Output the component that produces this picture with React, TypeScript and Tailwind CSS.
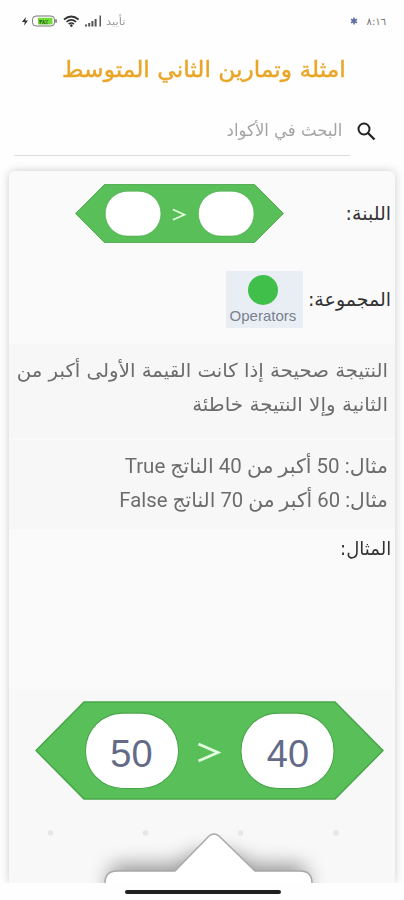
import { ReactNode } from 'react'

type BlockProps = {
  className: string;
  left?: string;
  right?: string;
};

function StatusBar() {
  return (
    <div dir="ltr" className="flex h-[42px] items-center justify-between pl-[21px] pr-[18px]">
      <div className="flex items-center">
        <svg width="85" height="16" viewBox="0 0 85 16">
          <path d="M5 4 .8 9h3L3 12.7 7 7.5H4.3z" fill="#333" />
          <rect x="11.5" y="3" width="22" height="10" rx="3.5" fill="#fff" stroke="#777" />
          <path d="M35 6.2v3.6" stroke="#777" strokeWidth="1.6" />
          <rect x="17" y="4.8" width="14.5" height="6.6" fill="#70dc35" />
          <text x="18" y="10.5" fontSize="6" fontWeight="bold" fill="#28631a" fontFamily="Liberation Sans, sans-serif">٣٨٪</text>
          <g fill="none" stroke="#333" strokeWidth="1.7">
            <path d="M43 6.5q7.300-6 14.600 0" />
            <path d="M45.500 8.900q4.800-4 9.600 0" />
            <path d="M47.600 11q2.700-2 5.400 0" />
          </g>
          <circle cx="50.300" cy="12.600" r="1.300" fill="#333" />
          <g fill="#555">
            <path d="M64 11.500h2v2h-2zM67.200 10h2v3.500h-2zM70.400 8h2v5.500h-2zM73.600 6h2v7.500h-2z" />
            <path d="M78.500 2.500h1.500v11h-1.500z" />
          </g>
        </svg>
        <span className="w-5 origin-left scale-x-115 font-['DejaVu_Sans',sans-serif] text-[10px] text-[#999]">تأييد</span>
      </div>
      <div className="flex items-center gap-[9px] font-['DejaVu_Sans',sans-serif] text-[10px] text-[#777]">
        <svg width="8" height="8" viewBox="0 0 8 8" stroke="#5b6ca5" strokeWidth="1.600">
          <path d="M4 .5v7M1 2.200l6 3.600M7 2.200 1 5.800" />
        </svg>
        <span>٨:١٦</span>
      </div>
    </div>
  )
}

function GreaterBlock({ className, left, right }: BlockProps) {
  return (
    <svg className={className} viewBox="0 0 349 98" preserveAspectRatio="none" direction="ltr" fontFamily="Liberation Sans, sans-serif">
      <path d="M1 49 49 1h251l48 48-48 48H49z" fill="#59c059" stroke="#48a448" strokeWidth="1.500" />
      <rect x="50.500" y="12" width="93" height="74.500" rx="37" fill="#fff" stroke="#48a448" />
      <rect x="206" y="12" width="93" height="74.500" rx="37" fill="#fff" stroke="#48a448" />
      <path d="M163.500 42.500 183 51 163.500 59.500" fill="none" stroke="#e4ffe0" strokeWidth="2.700" />
      {left && <text x="96.500" y="65" textAnchor="middle" fontSize="38" fill="#646b88">{left}</text>}
      {right && <text x="253" y="65" textAnchor="middle" fontSize="38" fill="#646b88">{right}</text>}
    </svg>
  )
}

function Label({ children }: { children: ReactNode }) {
  return <span className="whitespace-nowrap text-[19px] text-[#333]">{children}</span>
}

function App() {
  return (
    <div dir="rtl" className="flex h-[900px] w-[404px] flex-col overflow-hidden bg-[#fefefe] font-['DejaVu_Sans',sans-serif]">
      <StatusBar />
      <h1 className="flex h-[54px] items-center justify-center whitespace-nowrap text-[22px] text-[#e9a526]">
        <span className="ml-[4px] scale-x-106 [-webkit-text-stroke:0.4px_#e9a526]">امثلة وتمارين الثاني المتوسط</span>
      </h1>
      <div className="flex h-[75px] items-start pr-[28px]">
        <svg className="mt-[26px]" width="19" height="19" viewBox="0 0 19 19" fill="none" stroke="#222" strokeWidth="2">
          <circle cx="7" cy="7" r="5.500" />
          <path d="m11 11 6.500 6.500" strokeWidth="2.300" />
        </svg>
        <div className="mr-[7px] flex h-[60px] w-[336px] items-center border-b border-[#dcdcdc] pt-[11px] pr-2 text-[17px] text-[#a4a4a4]">
          <span className="origin-right scale-x-97">البحث في الأكواد</span>
        </div>
      </div>
      <main className="mx-[9px] flex h-[712px] shrink-0 flex-col overflow-hidden rounded-t-md bg-[#fafafa] shadow-[0_0_10px_rgba(0,0,0,0.2)]">
        <div className="flex h-[84px] shrink-0 items-center pr-[4px]">
          <Label>اللبنة:</Label>
          <GreaterBlock className="mr-auto ml-[66px] h-[59px] w-[209px]" />
        </div>
        <div className="flex h-[89px] shrink-0 items-center gap-[5px] pr-[4px]">
          <Label>المجموعة:</Label>
          <div className="flex h-[57px] w-[77px] flex-col items-center bg-[#e9eef4] pt-[4px]">
            <div className="mr-[3px] size-[30px] shrink-0 rounded-full bg-[#40bf4a]" />
            <span className="mt-[3px] mr-[3px] font-['Liberation_Sans',sans-serif] text-[15px] leading-[16px] text-[#7b8190]">Operators</span>
          </div>
        </div>
        <p className="h-[94px] shrink-0 whitespace-nowrap bg-[#f7f7f7] pt-[9px] pr-[7px] text-[19px] leading-[34px] text-[#6c6c6c]">
          <span className="block origin-right scale-x-104">النتيجة صحيحة إذا كانت القيمة الأولى أكبر من</span>
          <span className="block origin-right scale-x-105">الثانية وإلا النتيجة خاطئة</span>
        </p>
        <p className="mt-[2px] h-[89px] shrink-0 whitespace-nowrap bg-[#f7f7f7] pt-[9px] pr-[7px] font-['Roboto','DejaVu_Sans',sans-serif] text-[20px] leading-[34px] text-[#6c6c6c]">
          <span className="block origin-right scale-x-[1.025]">مثال: 50 أكبر من 40 الناتج True</span>
          <span className="block origin-right scale-x-[1.015]">مثال: 60 أكبر من 70 الناتج False</span>
        </p>
        <div className="flex h-[38px] shrink-0 origin-right scale-x-95 items-center pr-[4px]">
          <Label>المثال:</Label>
        </div>
        <div className="mt-[122px] flex h-[194px] shrink-0 flex-col bg-[#f8f8f8] pt-[12px]">
          <GreaterBlock className="mr-[11px] h-[99px] w-[349px] shrink-0" left="50" right="40" />
          <svg className="shrink-0" width="386" height="83" viewBox="0 0 386 83">
            <defs>
              <filter id="glow" x="-30%" y="-50%" width="160%" height="200%">
                <feGaussianBlur stdDeviation="10" />
              </filter>
            </defs>
            <g fill="#e6e6e6">
              <circle cx="41.500" cy="33" r="2.800" />
              <circle cx="136.500" cy="33" r="2.800" />
              <circle cx="231.500" cy="33" r="2.800" />
              <circle cx="327" cy="33" r="2.800" />
            </g>
            <path d="M100 120V78q0-13 12-13h54l20-12h38l20 12h42q12 0 12 13v42z" fill="#000" opacity=".4" filter="url(#glow)" />
            <path d="M96 120V83q0-12 12-12h58l34-35q5-4 10 0l36 35h45q12 0 12 12v37z" fill="#fff" stroke="#a8a8a8" strokeWidth="1.500" />
          </svg>
        </div>
      </main>
      <footer className="z-10 flex h-[17px] shrink-0 justify-center bg-[#fefefe] pt-[7px]">
        <div className="ml-px h-[4px] w-[156px] rounded-full bg-[#202020]" />
      </footer>
    </div>
  )
}

export default App
